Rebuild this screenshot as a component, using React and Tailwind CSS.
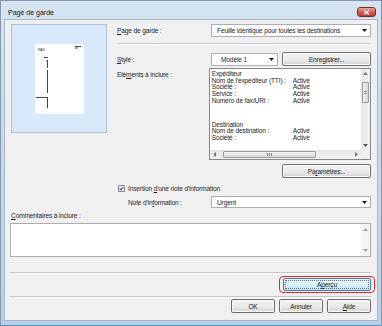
import React from "react";

const U = ({ children }) => <span className="underline decoration-[0.6px] underline-offset-[1px]">{children}</span>;

function Arrow({ dir = "down", color = "#1a1a1a" }) {
  const pts = {
    down: "0,0 5,0 2.5,3",
    up: "0,3 5,3 2.5,0",
    left: "3,0 3,5 0,2.5",
    right: "0,0 0,5 3,2.5",
  }[dir];
  const horiz = dir === "left" || dir === "right";
  return (
    <svg width={horiz ? 3 : 5} height={horiz ? 5 : 3} viewBox={horiz ? "0 0 3 5" : "0 0 5 3"}>
      <polygon points={pts} fill={color} />
    </svg>
  );
}

function Combo({ value, className = "", pad = "pl-[5px]" }) {
  return (
    <div className={`flex items-center justify-between border border-[#abadb3] bg-white pr-[3px] ${pad} ${className}`}>
      <span>{value}</span>
      <Arrow />
    </div>
  );
}

function Btn({ children, className = "" }) {
  return (
    <button
      type="button"
      className={`flex items-center justify-center rounded-[2px] border border-[#707070] bg-gradient-to-b from-[#f3f3f3] via-[#ebebeb] to-[#d6d6d6] text-[#1a1a1a] shadow-[inset_0_0_0_1px_#fcfcfc] ${className}`}
    >
      {children}
    </button>
  );
}

function Rule() {
  return <div className="h-[2px] border-t border-t-[#c4c4c4] border-b border-b-white" />;
}

function ScrollBtn({ dir, color = "#5a5a5a", className = "" }) {
  return (
    <div className={`flex h-[9px] w-[9px] shrink-0 items-center justify-center ${className}`}>
      <Arrow dir={dir} color={color} />
    </div>
  );
}

const rows1 = [
  ["Nom de l'expéditeur (TTI) :", "Activé"],
  ["Société :", "Activé"],
  ["Service :", "Activé"],
  ["Numéro de fax/URI :", "Activé"],
];
const rows2 = [
  ["Nom de destination :", "Activé"],
  ["Société :", "Activé"],
];

function ListBox() {
  return (
    <div className="flex h-[92px] w-[163px] flex-col border border-[#828790] bg-white">
      <div className="flex min-h-0 flex-1">
        <div className="flex-1 overflow-hidden pl-[2px] pt-[2px] leading-[6.7px]">
          <div>Expéditeur</div>
          {rows1.map(([k, v]) => (
            <div key={k} className="flex">
              <span className="w-[81px] shrink-0">{k}</span>
              <span>{v}</span>
            </div>
          ))}
          <div className="mt-[17px]">Destination</div>
          {rows2.map(([k, v]) => (
            <div key={k + v} className="flex">
              <span className="w-[81px] shrink-0">{k}</span>
              <span>{v}</span>
            </div>
          ))}
        </div>
        <div className="flex w-[9px] flex-col bg-gradient-to-r from-[#e6e6e6] to-[#f2f2f2]">
          <ScrollBtn dir="up" color="#777" />
          <div className="mx-[1px] mt-[4px] flex h-[21px] items-center justify-center rounded-[1px] border border-[#9b9b9b] bg-gradient-to-r from-[#f2f2f2] to-[#d8d8d8]">
            <div className="flex h-[3px] w-[3px] flex-col justify-between">
              <div className="h-px bg-[#8a8a8a]" />
              <div className="h-px bg-[#8a8a8a]" />
            </div>
          </div>
          <div className="flex-1" />
          <ScrollBtn dir="down" color="#555" />
        </div>
      </div>
      <div className="flex h-[9px]">
        <div className="flex flex-1 items-center bg-gradient-to-b from-[#e6e6e6] to-[#f2f2f2]">
          <ScrollBtn dir="left" color="#777" />
          <div className="ml-[4px] flex h-[7px] w-[93px] items-center justify-center rounded-[1px] border border-[#9b9b9b] bg-gradient-to-b from-[#f2f2f2] to-[#d8d8d8]">
            <div className="flex h-[3px] w-[5px] justify-between">
              <div className="w-px bg-[#8a8a8a]" />
              <div className="w-px bg-[#8a8a8a]" />
              <div className="w-px bg-[#8a8a8a]" />
            </div>
          </div>
          <div className="flex-1" />
          <ScrollBtn dir="right" color="#777" />
        </div>
        <div className="w-[9px] bg-[#f0f0f0]" />
      </div>
    </div>
  );
}

function PreviewPage() {
  return (
    <div className="h-[70px] w-[49px] bg-white">
      <svg width="49" height="70" viewBox="0 0 49 70">
        <text x="3" y="7" fontSize="4" fontFamily="Liberation Sans, Arial, sans-serif" fill="#333">
          FAX
        </text>
        <g stroke="#444" strokeWidth="1" fill="none">
          <line x1="40" y1="2.5" x2="46" y2="2.5" />
          <line x1="40" y1="4" x2="43" y2="4" />
          <line x1="9" y1="13.5" x2="13" y2="13.5" />
          <line x1="12.5" y1="16" x2="12.5" y2="24" />
          <line x1="11" y1="17.5" x2="12.5" y2="16" />
          <line x1="12.5" y1="26" x2="12.5" y2="49" />
          <line x1="1" y1="53.5" x2="13" y2="53.5" />
          <line x1="12.5" y1="53" x2="12.5" y2="64" />
        </g>
      </svg>
    </div>
  );
}

export default function App() {
  return (
    <div className="flex h-[326px] w-[382px] flex-col border border-[#8597ad] border-b-[#4f93cc] bg-gradient-to-b from-[#d5e3f2] via-[#c6d8ec] to-[#b9cfe8] font-['Liberation_Sans',Arial,sans-serif] text-[6.6px] leading-[7px] tracking-[-0.15px] text-[#1e1e1e]">
      {/* title bar */}
      <div className="flex h-[19px] shrink-0 items-center pl-[7px] pr-[5px] pt-[3px]">
        <span className="flex-1 text-[7px] tracking-normal text-[#111]">Page de garde</span>
        <div className="flex h-[10px] w-[19px] items-center justify-center rounded-[3px] border border-[#7b2a22] bg-gradient-to-b from-[#eaa799] via-[#d45f50] to-[#c23a2c]">
          <svg width="7" height="5" viewBox="0 0 7 5">
            <path d="M1 0.5 L6 4.5 M6 0.5 L1 4.5" stroke="white" strokeWidth="1.3" />
          </svg>
        </div>
      </div>

      {/* client area */}
      <div className="mx-[4px] mb-[5px] flex flex-1 flex-col bg-[#f0f0f0] px-[5px] pt-[4px] shadow-[0_0_0_1px_#a6b8cc]">
        <div className="flex">
          <div className="ml-[1px] flex h-[109px] w-[96px] items-center justify-center border border-[#b3c1ce] bg-[#d7e9fb]">
            <PreviewPage />
          </div>

          <div className="ml-[10px] flex w-[254px] flex-col">
            <div className="flex h-[13px] items-center">
              <span className="w-[94px]">
                <U>P</U>age de garde :
              </span>
              <Combo value="Feuille identique pour toutes les destinations" className="h-[13px] w-[160px]" />
            </div>
            <div className="mt-[6px]">
              <Rule />
            </div>
            <div className="mt-[7px] flex h-[14px] items-center">
              <span className="w-[94px]">
                <U>S</U>tyle :
              </span>
              <Combo value="Modèle 1" pad="pl-[9px]" className="h-[13px] w-[67px]" />
              <Btn className="ml-[4px] h-[14px] w-[89px]">Enregistrer...</Btn>
            </div>
            <div className="mt-[2px] flex">
              <span className="w-[92px] pt-[3px]">
                Elé<U>m</U>ents à inclure :
              </span>
              <ListBox />
            </div>
            <Btn className="mt-[4px] h-[14px] w-[89px] self-end">
              Pa<U>r</U>amètres...
            </Btn>
            <div className="mt-[6px] flex h-[8px] items-center">
              <div className="ml-[1px] flex h-[7px] w-[7px] items-center justify-center border border-[#8e8f8f] bg-gradient-to-br from-[#dfe8f5] to-[#ffffff]">
                <svg width="5" height="5" viewBox="0 0 5 5">
                  <path d="M0.6 2.6 L1.9 3.9 L4.4 0.8" stroke="#3c5a9a" strokeWidth="1.1" fill="none" />
                </svg>
              </div>
              <span className="ml-[3px]">
                Insertion <U>d</U>'une note d'information
              </span>
            </div>
            <div className="mt-[4px] flex h-[12px] items-center">
              <span className="w-[94px] pl-[11px]">
                Note d'in<U>f</U>ormation :
              </span>
              <Combo value="Urgent" className="h-[12px] w-[160px]" />
            </div>
          </div>
        </div>

        <div className="mt-[4px] pl-[1px]">
          <U>C</U>ommentaires à inclure :
        </div>
        <div className="mt-[4px] flex h-[34px] w-[361px] justify-end border border-[#abadb3] bg-white">
          <div className="flex w-[9px] flex-col justify-between bg-[#f4f4f4] py-[1px]">
            <ScrollBtn dir="up" color="#a8a8a8" />
            <ScrollBtn dir="down" color="#a8a8a8" />
          </div>
        </div>

        <div className="mt-[15px] w-[361px]">
          <Rule />
        </div>

        <div className="mt-[4px] flex w-[361px] justify-end">
          <div className="relative">
            <button
              type="button"
              className="flex h-[13px] w-[88px] items-center justify-center rounded-[2px] border border-[#3c7fb1] bg-gradient-to-b from-[#eaf6fd] via-[#d9f0fc] to-[#bee6fd] text-[#1a1a1a] outline-1 -outline-offset-[3px] outline-dotted outline-[#6b6b6b]"
            >
              A<U>p</U>erçu
            </button>
            <span className="pointer-events-none absolute -bottom-[2px] -left-[4px] -right-[4px] -top-[2px] rounded-[4px] border-[1.5px] border-[#e0262c]" />
          </div>
        </div>

        <div className="mt-[5px] w-[361px]">
          <Rule />
        </div>

        <div className="mt-[1px] flex w-[361px] justify-end gap-[4px]">
          <Btn className="h-[14px] w-[44px]">OK</Btn>
          <Btn className="h-[14px] w-[44px]">Annuler</Btn>
          <Btn className="h-[14px] w-[44px]">
            <U>A</U>ide
          </Btn>
        </div>
      </div>
    </div>
  );
}
